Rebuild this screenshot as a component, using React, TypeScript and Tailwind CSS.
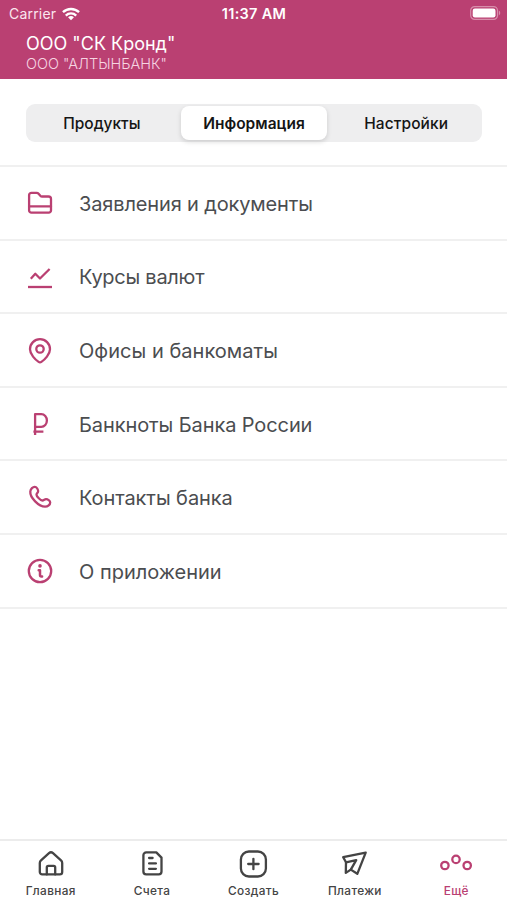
import type { ReactNode } from 'react';

interface IconProps {
  children: ReactNode;
  className?: string;
}

function Icon({ children, className = '' }: IconProps) {
  return (
    <svg
      viewBox="0 0 28 28"
      fill="none"
      stroke="currentColor"
      strokeWidth={2.3}
      strokeLinecap="round"
      strokeLinejoin="round"
      className={`w-7 h-7 shrink-0 overflow-visible ${className}`}
    >
      {children}
    </svg>
  );
}

const menu = [
  {
    label: 'Заявления и документы',
    tracking: 'tracking-[-0.14px]',
    icon: (
      <>
        <path d="M3.1 21.4V6.1a2.3 2.3 0 0 1 2.3-2.3h5.2a2.6 2.6 0 0 1 2 .9l1.7 2a2.4 2.4 0 0 0 1.8.8h6.4a2.5 2.5 0 0 1 2.5 2.5v11.4a2.3 2.3 0 0 1-2.3 2.3H5.4a2.3 2.3 0 0 1-2.3-2.3Z" />
        <path d="M3.1 17.3H25" />
      </>
    ),
  },
  {
    label: 'Курсы валют',
    tracking: 'tracking-[-0.26px]',
    icon: (
      <>
        <path d="m4.8 16.7 4.5-4.9 4.7 4.7 9.6-9.5" strokeLinecap="butt" />
        <path d="M2 25H26" strokeLinecap="butt" />
      </>
    ),
  },
  {
    label: 'Офисы и банкоматы',
    tracking: 'tracking-[0.03px]',
    icon: (
      <>
        <path d="M24 13.2c0 5.1-5.3 10.5-8.6 12.7a2.4 2.4 0 0 1-2.8 0C9.3 23.7 4 18.3 4 13.2a10 10 0 0 1 20 0Z" />
        <circle cx="14" cy="13" r="3.7" />
      </>
    ),
  },
  {
    label: 'Банкноты Банка России',
    tracking: 'tracking-[-0.1px]',
    icon: (
      <path d="M9.1 25V4.1h6.2a5.2 5.9 0 0 1 0 12.7H9.1M7.4 21.6h10" strokeLinecap="butt" />
    ),
  },
  {
    label: 'Контакты банка',
    tracking: 'tracking-[-0.08px]',
    icon: (
      <path d="M4.3 8.5c.2-2.6 2.6-4.9 4.8-4.6 1.8.2 3.3 3.2 3 4.6-.3 1.3-1.6 1.8-1.6 3.2 0 1.8 4.1 5.8 5.9 5.8 1.4 0 2.200-1.300 3.600-1.400 1.600-.1 4.200 1.700 4.200 3.300 0 2.200-2.300 4.300-5.100 4.300C12.800 23.700 3.800 14.500 4.300 8.500Z" />
    ),
  },
  {
    label: 'О приложении',
    tracking: 'tracking-normal',
    icon: (
      <>
        <circle cx="14" cy="14" r="11.2" />
        <circle cx="14" cy="8.900" r="1.800" fill="currentColor" stroke="none" />
        <path d="M12.700 13.200h1.300v4.800a1.400 1.400 0 0 0 1.400 1.400h.7" strokeWidth={2.500} />
      </>
    ),
  },
];

const tabs = [
  {
    label: 'Главная',
    icon: (
      <>
        <path d="M2.800 13c0-1.100.4-2 1.200-2.700l8-7.100a3 3 0 0 1 4 0l8 7.100c.8.700 1.200 1.600 1.200 2.700v9a2.400 2.400 0 0 1-2.400 2.400H5.200A2.400 2.400 0 0 1 2.800 22Z" />
        <path d="M9.800 24.400v-7a1.500 1.500 0 0 1 1.500-1.500h5.400a1.500 1.500 0 0 1 1.500 1.500v7" />
      </>
    ),
  },
  {
    label: 'Счета',
    icon: (
      <>
        <path d="M5.400 5.200a2.800 2.800 0 0 1 2.800-2.800h10.100l5.200 5.200v14a2.800 2.800 0 0 1-2.800 2.800H8.200a2.800 2.800 0 0 1-2.800-2.800Z" />
        <path d="M11.100 8h3.500M11.100 13.400h6.800M11.100 18.800h6.800" />
      </>
    ),
  },
  {
    label: 'Создать',
    icon: (
      <>
        <rect x="1.900" y="1.500" width="25" height="25" rx="8" />
        <path d="M14.400 8.800v10.400M9.200 14h10.400" />
      </>
    ),
  },
  {
    label: 'Платежи',
    icon: (
      <>
        <path d="M24.700 2.600 2.200 7.200 5 12.300l-.2 10.600 5-3.300 6.500 4.200Z" />
        <path d="m5 12.300 10.200-2.200-5.400 9.500" />
      </>
    ),
  },
  {
    label: 'Ещё',
    icon: (
      <>
        <circle cx="2.900" cy="15.500" r="3.700" />
        <circle cx="14" cy="9.400" r="3.700" />
        <circle cx="25.200" cy="15.500" r="3.700" />
      </>
    ),
  },
];

export default function App() {
  return (
    <div className="flex flex-col w-[507px] h-[900px] overflow-hidden bg-white font-['Inter','Liberation_Sans',sans-serif]">
      {/* Header */}
      <header className="h-[79px] shrink-0 bg-[#ba4072] text-white">
        <div className="grid grid-cols-3 items-center h-7 pl-[9px] pr-[6px]">
          <div className="flex items-center gap-[6px]">
            <span className="text-[14px] leading-7 tracking-[0.2px] text-[#fbe6ef]">Carrier</span>
            <svg viewBox="0 0 19 14" className="w-[18px] h-[14px]" fill="none" stroke="#fff" strokeWidth="2.5">
              <path d="M1 5.1a12.3 12.3 0 0 1 17 0" />
              <path d="M4 8.6a8 8 0 0 1 11 0" />
              <path d="M9.5 13.7 6.4 10.5a4.6 4.6 0 0 1 6.2 0Z" fill="#fff" stroke="none" />
            </svg>
          </div>
          <span className="-ml-[2px] text-center text-[14.5px] leading-7 font-semibold tracking-[0.3px] whitespace-nowrap">11:37 AM</span>
          <svg viewBox="0 0 31 14" className="w-[31px] h-[14px] -mt-[2px] justify-self-end">
            <rect x="0.7" y="0.6" width="26.8" height="12.8" rx="4" fill="none" stroke="#d78eab" strokeWidth="1.2" />
            <rect x="2.7" y="2.5" width="22.8" height="9" rx="2.2" fill="#fff" />
            <path d="M28.9 4.6c1.800.9 1.800 3.900 0 4.800Z" fill="#d78eab" />
          </svg>
        </div>
        <div className="flex flex-col pl-[26px] pt-[5px]">
          <span className="text-[18px] leading-[22px] self-start">ООО "СК Кронд"</span>
          <span className="text-[14.5px] leading-[18px] font-light self-start text-[#f6d5e2]">ООО "АЛТЫНБАНК"</span>
        </div>
      </header>

      {/* Segmented control */}
      <div className="h-[86px] shrink-0 pt-[25px] pl-[26px] pr-[25px]">
        <div className="grid grid-cols-3 h-[38px] p-[2px] rounded-[9px] bg-[#eeeeef] text-[15.5px] font-medium text-[#151515]">
          <button className="flex items-center justify-center pt-[2px] pr-[3px]">Продукты</button>
          <button className="flex items-center justify-center pt-[2px] mx-[2px] rounded-[8px] bg-white font-semibold shadow-[0_2px_5px_rgba(0,0,0,0.14)]">
            Информация
          </button>
          <button className="flex items-center justify-center pt-[2px] pl-[3px] tracking-[0.1px]">Настройки</button>
        </div>
      </div>

      {/* Menu */}
      <ul className="border-t-2 border-[#f0f0f0] text-[#4b4d50]">
        {menu.map(item => (
          <li key={item.label} className="flex items-center h-[73.6px] pl-[26px] border-b-2 border-[#f0f0f0]">
            <Icon className="text-[#ba4072]">{item.icon}</Icon>
            <span className={`ml-[25px] pt-[2px] text-[20px] leading-7 whitespace-nowrap ${item.tracking}`}>{item.label}</span>
          </li>
        ))}
      </ul>

      {/* Tab bar */}
      <nav className="mt-auto grid grid-cols-5 h-[61px] shrink-0 border-t-2 border-[#ececec] text-[#444]">
        {tabs.map(tab => (
          <button
            key={tab.label}
            className={`flex flex-col items-center pt-[9px] ${tab.label === 'Ещё' ? 'text-[#ba4072]' : ''}`}
          >
            <Icon>{tab.icon}</Icon>
            <span className="mt-[5px] text-[11.8px] leading-4 font-medium tracking-[0.35px]">{tab.label}</span>
          </button>
        ))}
      </nav>
    </div>
  );
}
